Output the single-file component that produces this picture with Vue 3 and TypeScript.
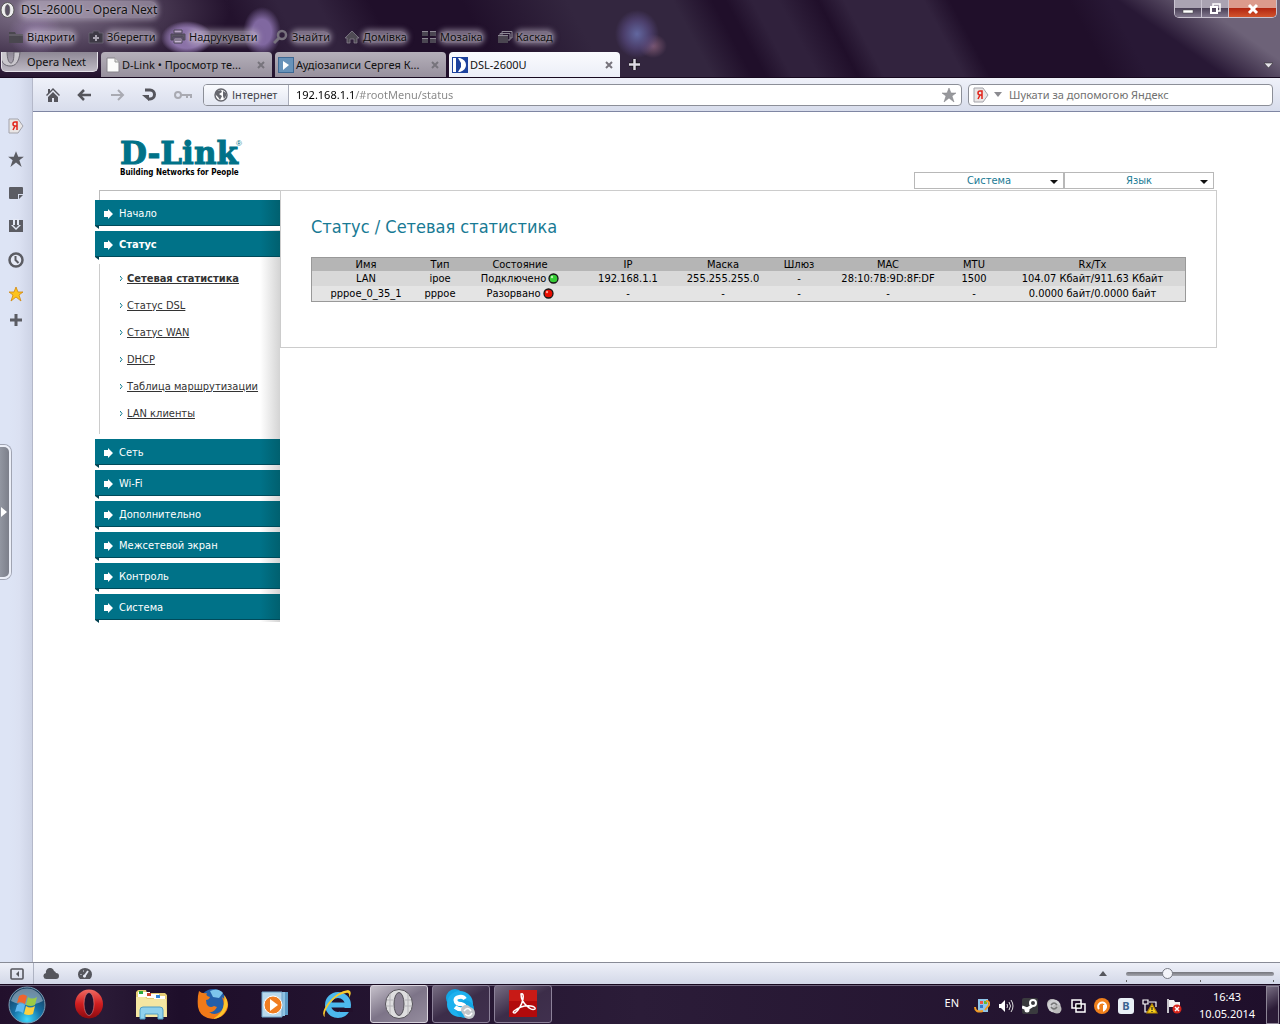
<script setup lang="ts">
import { ref } from 'vue'

interface Row {
  name: string
  type: string
  state: string
  up: boolean
  ip: string
  mask: string
  gateway: string
  mac: string
  mtu: string
  traffic: string
}

const columns: { label: string; width: number }[] = [
  { label: 'Имя', width: 108 },
  { label: 'Тип', width: 40 },
  { label: 'Состояние', width: 120 },
  { label: 'IP', width: 96 },
  { label: 'Маска', width: 94 },
  { label: 'Шлюз', width: 58 },
  { label: 'MAC', width: 120 },
  { label: 'MTU', width: 52 },
  { label: 'Rx/Tx', width: 185 },
]

const rows: Row[] = [
  { name: 'LAN', type: 'ipoe', state: 'Подключено', up: true, ip: '192.168.1.1', mask: '255.255.255.0', gateway: '-', mac: '28:10:7B:9D:8F:DF', mtu: '1500', traffic: '104.07 Кбайт/911.63 Кбайт' },
  { name: 'pppoe_0_35_1', type: 'pppoe', state: 'Разорвано', up: false, ip: '-', mask: '-', gateway: '-', mac: '-', mtu: '-', traffic: '0.0000 байт/0.0000 байт' },
]

const menu: { label: string; children?: string[] }[] = [
  { label: 'Начало' },
  { label: 'Статус', children: ['Сетевая статистика', 'Статус DSL', 'Статус WAN', 'DHCP', 'Таблица маршрутизации', 'LAN клиенты'] },
  { label: 'Сеть' },
  { label: 'Wi-Fi' },
  { label: 'Дополнительно' },
  { label: 'Межсетевой экран' },
  { label: 'Контроль' },
  { label: 'Система' },
]

const address = ref('192.168.1.1/#rootMenu/status')
const query = ref('')
const zoom = ref(26)
</script>

<template>
  <div class="desktop">
    <header class="frame">
      <div class="titlebar">
        <svg width="16" height="16" viewBox="0 0 16 16"><ellipse cx="7.500" cy="8" rx="6.500" ry="7.500" fill="#eee" stroke="#555" /><ellipse cx="7.500" cy="8" rx="2.300" ry="5.500" fill="#5b5264" stroke="#555" stroke-width=".6" /></svg>
        <span class="title"><span class="glow">DSL-2600U - Opera Next</span></span>
        <div class="winbtns">
          <button type="button" aria-label="Minimize"><svg width="12" height="12"><rect x="1" y="7" width="10" height="3" fill="#fff" stroke="#444" stroke-width=".5" /></svg></button>
          <button type="button" aria-label="Restore"><svg width="12" height="12" fill="none" stroke="#fff" stroke-width="1.5"><path d="M4 3V1h7v7H9" /><rect x="2" y="4" width="6" height="6" stroke-width="2" /></svg></button>
          <button type="button" aria-label="Close" class="close"><svg width="12" height="12" stroke="#fff" stroke-width="3"><path d="M2 2l8 8M10 2l-8 8" /></svg></button>
        </div>
      </div>

      <nav class="tools">
        <button type="button"><svg width="16" height="16"><path d="M1 3h6l1 2h7v9H1z" fill="#4a474f" /><path d="M1 6h14" stroke="#77727d" /></svg><span class="glow">Відкрити</span></button>
        <button type="button"><svg width="16" height="16"><path d="M1 4h4V2h6v2h4v10H1z" fill="#3d3945" stroke="#6b6674" stroke-width=".8" /><path d="M8 6v6M5 9h6" stroke="#aaa5b2" stroke-width="2" /></svg><span class="glow">Зберегти</span></button>
        <button type="button"><svg width="16" height="16"><path d="M4 1h8v3H4z" fill="#b9a6c8" stroke="#4b4554" /><path d="M1 5h14v6h-2V8H3v3H1z" fill="#5b5564" stroke="#4b4554" /><path d="M4 9h8v5H4z" fill="#c5b5d2" stroke="#4b4554" /><path d="M5 11h6" stroke="#4b4554" /></svg><span class="glow">Надрукувати</span></button>
        <button type="button"><svg width="16" height="16" fill="none" stroke="#77727d"><circle cx="9" cy="6" r="4" stroke-width="2.500" /><path d="M6 9l-5 5" stroke-width="3" /></svg><span class="glow">Знайти</span></button>
        <button type="button"><svg width="16" height="16"><path d="M8 2l7 7h-2v5h-3v-4H6v4H3V9H1z" fill="#4f4b54" stroke="#8d8894" stroke-width=".7" /></svg><span class="glow">Домівка</span></button>
        <button type="button"><svg width="16" height="16" fill="#4b4652"><path d="M1 3h6v4H1zM9 3h6v4H9zM1 10h6v4H1zM9 10h6v4H9z" /><path d="M1 2.500h6M9 2.500h6M1 9.500h6M9 9.500h6" stroke="#8d8894" /></svg><span class="glow">Мозаїка</span></button>
        <button type="button"><svg width="16" height="16"><path d="M5 7V2.500h10V9h-2M3 7V4.500h10V11h-2" fill="none" stroke="#8d8894" /><path d="M1 6h10v8H1z" fill="#4a4550" /><path d="M1 6.500h10" stroke="#8d8894" /></svg><span class="glow">Каскад</span></button>
      </nav>

      <div class="tabs">
        <button type="button" class="operamenu"><svg width="20" height="20" viewBox="0 0 20 20"><path d="M-1-2v6c0 7 4 10 9 10s9-3 10-14h-6c0 7-1 11-3 11S5 8 5-2z" fill="#c9c6cc" stroke="#6a6670" /></svg><span>Opera Next</span></button>
        <div class="tab">
          <svg width="16" height="16" viewBox="-2 0 16 16"><path d="M1 1h8l4 4v10H1z" fill="#fbfbfb" stroke="#87848b" /><path d="M9 1v4h4" fill="#ddd" stroke="#999" /></svg>
          <span class="tabname">D-Link • Просмотр те...</span><button type="button" class="x" aria-label="Close tab"><svg width="8" height="8"><path d="M1 1l6 6M7 1L1 7" /></svg></button>
        </div>
        <div class="tab">
          <svg width="16" height="16"><rect width="16" height="16" fill="#3e6994" /><rect x="1" y="1" width="14" height="14" fill="#6792b9" /><path d="M5 4l6 4-6 5z" fill="#fff" /></svg>
          <span class="tabname">Аудіозаписи Сергея К...</span><button type="button" class="x" aria-label="Close tab"><svg width="8" height="8"><path d="M1 1l6 6M7 1L1 7" /></svg></button>
        </div>
        <div class="tab active">
          <svg width="16" height="16"><rect width="16" height="16" fill="#1d429d" /><path d="M1 1h3v14H1zM6 1h2q6 2 6 7t-6 7H6l3-5V6z" fill="#fff" /></svg>
          <span class="tabname">DSL-2600U</span><button type="button" class="x" aria-label="Close tab"><svg width="8" height="8"><path d="M1 1l6 6M7 1L1 7" /></svg></button>
        </div>
        <button type="button" class="newtab" aria-label="New tab"><svg width="13" height="13"><path d="M6.500 1v11M1 6.500h11" stroke="#111" stroke-width="4" /><path d="M6.500 1v11M1 6.500h11" stroke="#ddd9e2" stroke-width="2.500" /></svg></button>
        <button type="button" class="closedtabs" aria-label="Closed tabs"><svg width="9" height="6"><path d="M0 1h9L4.500 6z" fill="#e6e3ea" stroke="#333" stroke-width=".6" /></svg></button>
      </div>
    </header>

    <div class="body">
      <aside class="panelbar">
        <svg class="ya" width="16" height="16"><path d="M1 1h9l5 7-5 7H1z" fill="#e9e6e6" stroke="#a3a3aa" /><path d="M9 12V4H7q-2 0-2 2t2 2h2M7 8l-2 4" fill="none" stroke="#e2231a" stroke-width="1.500" /></svg>
        <svg width="18" height="18" viewBox="0 0 16 16"><path d="M8 1l2 5h5l-4 3 2 6-5-4-5 4 2-6-4-3h5z" fill="#5b5c63" /></svg>
        <svg width="16" height="16"><path d="M2 2h12q1 0 1 1v6h-5v5H2q-1 0-1-1V3q0-1 1-1z" fill="#5b5c63" /><path d="M11 10h4l-4 4z" fill="#5b5c63" /></svg>
        <svg width="16" height="16"><path d="M1 2h14v12H1z" fill="#5b5c63" /><path d="M5 1h6v6h2l-5 5-5-5h2z" fill="#e3e8f5" /><path d="M7 2h2v5h2l-3 3-3-3h2z" fill="#5b5c63" /></svg>
        <svg width="18" height="18"><circle cx="9" cy="9" r="6.500" fill="#e6eaf6" stroke="#5b5c63" stroke-width="2.500" /><path d="M8.500 5v4l3 3" fill="none" stroke="#5b5c63" stroke-width="2" /></svg>
        <svg width="16" height="16"><path d="M8 1l2 5h5l-4 3 2 6-5-4-5 4 2-6-4-3h5z" fill="#fdc31d" stroke="#d0860f" stroke-width=".8" /></svg>
        <svg class="add" width="14" height="14"><path d="M7 1v12M1 7h12" stroke="#5b5c63" stroke-width="3" /></svg>
        <button type="button" class="handle" aria-label="Show panel"><svg width="6" height="10"><path d="M0 0l6 5-6 5z" fill="#fff" /></svg></button>
      </aside>

      <div class="main">
        <div class="addressbar">
          <div class="navicons">
            <button type="button" aria-label="Home"><svg width="16" height="16"><path d="M8 1l7 7-1 1-6-6-6 6-1-1 2-2V2h2v2zM8 5l5 5v5H9v-4H7v4H3v-5z" fill="#55555c" /></svg></button>
            <button type="button" aria-label="Back"><svg width="16" height="16" fill="none" stroke="#55555c" stroke-width="2.500"><path d="M14 8H3M7 3L2 8l5 5" /></svg></button>
            <button type="button" aria-label="Forward"><svg width="16" height="16" fill="none" stroke="#a9aab2" stroke-width="2"><path d="M2 8h11M9 3l5 5-5 5" /></svg></button>
            <button type="button" aria-label="Reload"><svg width="16" height="16"><path d="M4 3h5a4 4 0 0 1 0 9H7" fill="none" stroke="#55555c" stroke-width="3" /><path d="M1 8h7v6z" fill="#55555c" /></svg></button>
            <button type="button" aria-label="Password manager"><svg width="20" height="12"><circle cx="5" cy="6" r="3" fill="none" stroke="#a9aab2" stroke-width="2" /><path d="M8 6h10v3M14 6v3" fill="none" stroke="#a9aab2" stroke-width="2" /></svg></button>
          </div>
          <div class="field url">
            <button type="button" class="badge"><svg width="14" height="14"><circle cx="7" cy="7" r="6" fill="#fff" stroke="#66676e" stroke-width="1.500" /><path d="M3 3l4-1 1 2-3 2 3 2-2 4-2-3-3-3zM9 3l3 2 0 3-2 3-1-3z" fill="#66676e" /></svg>Інтернет</button>
            <input v-model="address" class="addr" type="text" aria-label="Address">
            <svg class="fav" width="16" height="16"><path d="M8 1l2 5h5l-4 3 2 6-5-4-5 4 2-6-4-3h5z" fill="#97989c" stroke="#808187" stroke-width=".5" /></svg>
          </div>
          <div class="field search">
            <svg width="16" height="16"><path d="M1 1h9l5 7-5 7H1z" fill="#e9e6e6" stroke="#a3a3aa" /><path d="M9 12V4H7q-2 0-2 2t2 2h2M7 8l-2 4" fill="none" stroke="#e2231a" stroke-width="1.500" /></svg>
            <svg class="drop" width="8" height="5"><path d="M0 0h8L4 5z" fill="#8b8b90" /></svg>
            <input v-model="query" type="text" placeholder="Шукати за допомогою Яндекс" aria-label="Search">
          </div>
        </div>

        <div class="page">
          <div class="site">
            <div class="top">
              <a href="#" class="logo"><span class="brand">D-Link<sup>®</sup></span><span class="slogan">Building Networks for People</span></a>
              <div class="selects">
                <label class="pick"><select aria-label="Система"><option>Система</option></select></label>
                <label class="pick"><select aria-label="Язык"><option>Язык</option></select></label>
              </div>
            </div>
            <div class="cols">
              <nav class="menu">
                <div class="rail"></div>
                <template v-for="m in menu" :key="m.label">
                  <a href="#" class="item" :class="{ open: m.children }">
                    <svg width="10" height="10"><path d="M0 2h4V0l5 5-5 5V8H0z" fill="#fff" /></svg>{{ m.label }}
                  </a>
                  <ul v-if="m.children" class="sub">
                    <li v-for="(c, i) in m.children" :key="c" :class="{ current: i === 0 }">
                      <svg width="3" height="5"><path d="M0 0l2 2.500L0 5" fill="none" stroke="#007288" /></svg><a href="#">{{ c }}</a>
                    </li>
                  </ul>
                </template>
              </nav>
              <main class="panel">
                <h1>Статус / Сетевая статистика</h1>
                <table>
                  <colgroup><col v-for="c in columns" :key="c.label" :style="{ width: c.width + 'px' }"></colgroup>
                  <thead><tr><th v-for="c in columns" :key="c.label" scope="col">{{ c.label }}</th></tr></thead>
                  <tbody>
                    <tr v-for="r in rows" :key="r.name">
                      <td>{{ r.name }}</td>
                      <td>{{ r.type }}</td>
                      <td><span class="state">{{ r.state }}<svg width="11" height="11"><circle cx="5.500" cy="5.500" r="4.500" :fill="r.up ? '#35cc35' : '#e80d00'" stroke="#151515" stroke-width="1.300" /><circle cx="4" cy="4" r="1.200" :fill="r.up ? '#b9f5b0' : '#ff9a8a'" /></svg></span></td>
                      <td>{{ r.ip }}</td>
                      <td>{{ r.mask }}</td>
                      <td>{{ r.gateway }}</td>
                      <td>{{ r.mac }}</td>
                      <td>{{ r.mtu }}</td>
                      <td>{{ r.traffic }}</td>
                    </tr>
                  </tbody>
                </table>
              </main>
            </div>
          </div>
        </div>
      </div>
    </div>

    <div class="statusbar">
      <button type="button" class="toggle" aria-label="Panels"><svg width="14" height="12"><rect x="1" y="1" width="12" height="10" rx="1" fill="none" stroke="#55565d" stroke-width="1.600" /><path d="M9 3v6L6 6z" fill="#55565d" /></svg></button>
      <button type="button" aria-label="Opera Link"><svg width="16" height="12"><path d="M4 11a3 3 0 0 1-1-6 4 4 0 0 1 8-2 3 3 0 0 1 2 2 3 3 0 0 1 0 6z" fill="#55565d" /></svg></button>
      <button type="button" aria-label="Opera Turbo"><svg width="16" height="14"><path d="M3 12a7 6.500 0 1 1 10 0z" fill="#55565d" /><path d="M7 10l4-6" stroke="#e4e8f4" stroke-width="1.800" /><path d="M4 8V7M6 4h1" stroke="#e4e8f4" /><circle cx="7.500" cy="9" r="1.500" fill="#e4e8f4" /></svg></button>
      <svg class="up" width="8" height="5"><path d="M0 5h8L4 0z" fill="#55565d" /></svg>
      <div class="zoom">
        <input v-model="zoom" type="range" min="0" max="100" aria-label="Zoom">
        <div class="ticks"><i></i><i></i><i></i></div>
      </div>
    </div>

    <footer class="taskbar">
      <button type="button" class="start" aria-label="Start">
        <svg width="38" height="38" viewBox="0 0 38 38">
          <defs><radialGradient id="orb" cx=".5" cy=".9" r=".8"><stop offset="0" stop-color="#3fd8fb" /><stop offset=".5" stop-color="#1673a8" /><stop offset="1" stop-color="#173d5e" /></radialGradient></defs>
          <circle cx="19" cy="19" r="18" fill="url(#orb)" stroke="#7e9db3" /><path d="M3 15a16.500 16.500 0 0 1 32 0q-16 8-32 0z" fill="#c3d6e2" opacity=".5" />
          <path d="M11 10q4-3 8 0l-2 8q-4-3-8-1z" fill="#f0642d" /><path d="M20 11q4 3 9 0l-2 8q-4 2-9 0z" fill="#9ccb45" /><path d="M9 19q4-3 8 0l-2 8q-4-3-8-1z" fill="#5fb8f0" /><path d="M18 20q4 3 9 0l-2 8q-4 2-9 0z" fill="#fdd13e" />
        </svg>
      </button>
      <div class="tasks">
        <button type="button" aria-label="Opera"><svg width="30" height="32" viewBox="0 0 30 32"><defs><linearGradient id="red" x2="0" y2="1"><stop offset="0" stop-color="#f06a62" /><stop offset=".5" stop-color="#cf1d1f" /><stop offset="1" stop-color="#8c0b10" /></linearGradient></defs><ellipse cx="15" cy="16" rx="14" ry="14.500" fill="url(#red)" /><ellipse cx="15" cy="16" rx="5" ry="11.500" fill="#22102c" stroke="#e88" stroke-width=".6" /></svg></button>
        <button type="button" aria-label="Explorer"><svg width="34" height="32" viewBox="0 0 34 32"><path d="M2 4l2-2h8l1 3h18l2 2v22H2z" fill="#e6cd76" /><path d="M4 4h12v5H4zM13 6h12v4H13zM20 8h11v4H20z" fill="#fff" /><path d="M5 3h4v3H5z" fill="#2ca83b" /><path d="M13 5h4v3h-4z" fill="#d0422e" /><path d="M22 7h4v3h-4z" fill="#3186d6" /><path d="M2 9h9l2 2h19l1 18H2z" fill="#f5e6a2" /><path d="M6 31V22q0-3 3-3h17q3 0 3 3v9h-5v-5H11v5z" fill="#8fd0ec" stroke="#4f9dc6" /></svg></button>
        <button type="button" aria-label="Firefox"><svg width="32" height="32" viewBox="0 0 32 32"><circle cx="16" cy="14" r="13" fill="#235fa9" /><path d="M13 3q8-4 13 2l-4 5-6-1z" fill="#7cc4ec" /><path d="M2 3q3 3 8 2-2 3 3 4-1 3-4 3 0 4 2 6 3 2 6 0l3 1q-3 6-8 5 5 4 11 0 6-5 2-15 3 2 3 3l0-4q5 7 2 14-5 9-14 9Q3 30 1 19 0 10 2 3z" fill="#f07a18" /><path d="M27 7q6 8 2 15-4 8-13 9 8-5 10-11 2-6 1-13z" fill="#fcc52c" /></svg></button>
        <button type="button" aria-label="Media Player"><svg width="30" height="30" viewBox="0 0 30 30"><path d="M8 3h20v23H8z" fill="#5b9ac5" /><path d="M5 3h20v24H5z" fill="#8fc2e2" /><path d="M2 3h20v25H2z" fill="#b9d8ec" stroke="#6fa3c8" /><circle cx="13" cy="16" r="9" fill="#f07d21" stroke="#fff" /><path d="M10 10l8 6-8 6z" fill="#fff" /></svg></button>
        <button type="button" aria-label="Internet Explorer"><svg width="32" height="32" viewBox="0 0 32 32"><circle cx="17" cy="17" r="10" fill="none" stroke="#4cb9ee" stroke-width="6" /><path d="M10 17h18" stroke="#4cb9ee" stroke-width="5" /><path d="M19 20h13v4H19z" fill="#22102c" /><path d="M4 29Q-1 26 7 15 17 3 27 2q5 1 1 8 1-6-3-5-8 1-15 9-8 10-6 15z" fill="#f7c92d" /></svg></button>
        <button type="button" class="on" aria-label="Opera Next"><svg width="30" height="32" viewBox="0 0 30 32"><ellipse cx="15" cy="16" rx="13.500" ry="14.500" fill="#dededf" stroke="#55525a" /><ellipse cx="15" cy="16" rx="5" ry="11.500" fill="#8d8596" stroke="#55525a" /><path d="M3 12h6M2 18h7M21 12h6M21 18h7M6 6v20M24 6v20" stroke="#b5b4b8" /></svg></button>
        <button type="button" class="run" aria-label="Skype"><svg width="32" height="32" viewBox="0 0 32 32"><circle cx="10" cy="10" r="9" fill="#12a5e4" /><circle cx="15" cy="16" r="13" fill="#1eb1ee" /><circle cx="20" cy="21" r="9" fill="#12a5e4" /><path d="M20 11q-2-3-6-2-5 1-3 5 1 2 5 2 5 1 3 4-4 3-9-1" fill="none" stroke="#fff" stroke-width="4" /><circle cx="21" cy="22" r="5" fill="#c3c7cb" /><circle cx="24" cy="25" r="6" fill="#c3c7cb" /><path d="M19 23q4-5 7 0M27 25q-3 5-7 1" fill="none" stroke="#fff" stroke-width="1.600" /></svg></button>
        <button type="button" class="run" aria-label="Adobe Reader"><svg width="30" height="30" viewBox="0 0 30 30"><rect x="1" y="1" width="28" height="27" fill="#b20a0c" /><path d="M1 1h28v11H1z" fill="#c81a16" /><path d="M13 5q3-1 2 5-2 9-8 14-3 0-1-2 8-6 17-5 5 1 4 3-3 2-8-3-6-5-6-12z" fill="none" stroke="#fff" stroke-width="1.500" /></svg></button>
      </div>
      <div class="tray">
        <span class="lang">EN</span>
        <div class="icons">
          <svg width="16" height="16"><path d="M4 1h10v13H4z" fill="#8ec5ea" /><path d="M6 3h3v3H6z" fill="#e54" /><path d="M10 3h3v3h-3z" fill="#6b3" /><path d="M6 7h3v3H6z" fill="#37c" /><path d="M1 9q0 6 8 4M12 3q4 0 3 4l-4 5" fill="none" stroke="#f09a25" stroke-width="2" /></svg>
          <svg width="16" height="16"><path d="M1 6h2l4-4v12l-4-4H1z" fill="#fff" /><path d="M9 6q1 2 0 4M11 4q3 4 0 8M13 2q4 6 0 12" fill="none" stroke="#ddd" /></svg>
          <svg width="16" height="16"><rect width="16" height="16" rx="2" fill="#3a3a3e" /><circle cx="11" cy="5" r="3" fill="none" stroke="#fff" stroke-width="2" /><path d="M0 9l5 2 5-3" fill="none" stroke="#fff" stroke-width="3" /><circle cx="5" cy="12" r="2.500" fill="#fff" /></svg>
          <svg width="16" height="16"><circle cx="6" cy="6" r="5" fill="#bbb" /><circle cx="8" cy="8" r="6.500" fill="#cfcfd1" /><circle cx="11" cy="11" r="4.500" fill="#bbb" /><path d="M5 7q3-4 6 0M11 9q-3 4-6 0" fill="none" stroke="#777" stroke-width="1.500" /></svg>
          <svg width="16" height="16" fill="#22102c" stroke="#fff" stroke-width="1.500"><path d="M2 2h9v8H2zM6 6h9v8H6z" /><path d="M6 6h5v4H6z" fill="#000" stroke-width="1" /></svg>
          <svg width="16" height="16"><circle cx="8" cy="8" r="8" fill="#f0801c" /><path d="M5 11a4 4 0 1 1 5 1V7" fill="none" stroke="#fff" stroke-width="2" /></svg>
          <span class="vk">B</span>
          <svg width="16" height="16" fill="none" stroke="#fff" stroke-width="1.200"><path d="M1 2h5v4H1zM3 6v8h5M7 4h7v5" /><path d="M10 6l5 9H5z" fill="#f6cf1f" stroke="#b98a00" /><path d="M10 9v3M10 13v1" stroke="#222" /></svg>
          <svg width="16" height="16"><path d="M2 1v14" stroke="#fff" stroke-width="1.500" /><path d="M3 2h5l1 2h5v5H3z" fill="#f2f2f2" /><circle cx="11" cy="11" r="4.500" fill="#d7261c" /><path d="M9 9l4 4M13 9l-4 4" stroke="#fff" stroke-width="1.500" /></svg>
        </div>
        <div class="clock"><span>16:43</span><span>10.05.2014</span></div>
        <button type="button" class="peek" aria-label="Show desktop"></button>
      </div>
    </footer>
  </div>
</template>

<style>
body { background: #22102c; }
</style>

<style scoped>
* { box-sizing: border-box; }
.desktop { min-height: 100vh; display: flex; flex-direction: column; font: 11px/16px "Noto Sans", "Open Sans", sans-serif; color: #111; }
button { font: inherit; color: inherit; background: none; border: 0; padding: 0; margin: 0; display: flex; align-items: center; }
svg { display: block; flex: none; }
input { font: inherit; border: 0; outline: 0; background: none; padding: 0; min-width: 0; }

.frame {
  height: 78px;
  display: flex;
  flex-direction: column;
  border-bottom: 1px solid #17091f;
  background:
    radial-gradient(ellipse 28px 24px at 36px 34px, #a58abf99, transparent),
    radial-gradient(ellipse 26px 17px at 187px 38px, #8b72a8 60%, #8b72a888 82%, transparent),
    radial-gradient(ellipse 19px 25px at 262px 32px, #8068a0 50%, #8068a066 80%, transparent),
    radial-gradient(ellipse 22px 24px at 637px 34px, #62679f, #574a80aa 60%, transparent),
    radial-gradient(ellipse 14px 12px at 653px 46px, #a0708aaa, transparent),
    radial-gradient(ellipse 190px 70px at 40px 10px, #85788f, transparent),
    linear-gradient(35deg, transparent 62%, #6d6278 80%) right / 320px 78px no-repeat,
    linear-gradient(62deg, #23122d 0 20%, #32233e 24% 27%, #200f2a 31% 38%, #33263f 46% 54%, #200f2a 57% 58%, #30213c 60% 62%, #200f2a 65%, #32233e 67% 73%, #200f2a 75% 84%, #281835 87%);
}
.glow { background: #c3bacb80; box-shadow: 0 0 5px 2px #c3bacb80; border-radius: 6px; line-height: 12px; text-shadow: 0 0 3px #fff8; }
.titlebar { height: 21px; display: flex; align-items: center; gap: 5px; }
.title { flex: 1; font-size: 12px; }
.winbtns { align-self: flex-start; display: flex; height: 18px; margin-right: 3px; border: 1px solid #c9c3d0; border-top: 0; border-radius: 0 0 5px 5px; overflow: hidden; }
.winbtns button { width: 27px; height: 17px; justify-content: center; background: linear-gradient(#aaa3b2 0 45%, #4b4157 50%, #81778d); border-right: 1px solid #c9c3d0; }
.winbtns .close { width: 47px; border: 0; background: linear-gradient(#dc9a8c 0 45%, #b22712 50%, #d2542c); }

.tools { display: grid; grid-template-columns: 80px 82px 103px 71px 77px 76px auto; justify-content: start; padding: 2px 0 0 8px; height: 32px; align-items: center; }
.tools button { gap: 3px; }

.tabs { flex: 1; display: flex; gap: 3px; padding-left: 1px; }
.operamenu { width: 97px; height: 20px; border: 1px solid #e6e3ea; border-top: 0; border-radius: 0 0 5px 5px; background: linear-gradient(#8d8794, #bdb8c3); gap: 5px; overflow: hidden; }
.tab { width: 171px; height: 25px; display: flex; align-items: center; padding: 0 7px 0 3px; gap: 2px; border-radius: 4px 4px 0 0; background: linear-gradient(#b5b0ba, #97909d); }
.tab.active { background: linear-gradient(#fafbfe, #eceef7); }
.tabname { flex: 1; white-space: nowrap; }
.x svg { stroke: #77747c; stroke-width: 2; }
.newtab { padding-left: 5px; }
.closedtabs { margin-left: auto; padding-right: 7px; }

.body { flex: 1; display: flex; }
.panelbar { width: 33px; position: relative; display: flex; flex-direction: column; align-items: center; gap: 17px; padding-top: 40px; background: linear-gradient(90deg, #dde4f5 30%, #dbe1f2 60%, #cdd3e5); border-right: 1px solid #b4b8c9; }
.panelbar .ya { margin-bottom: -1px; }
.panelbar .add { margin-top: -6px; }
.handle { position: absolute; left: 0; top: 367px; width: 11px; height: 134px; padding-left: 1px; border: 2px solid #eceff8; border-left: 0; border-radius: 0 7px 7px 0; background: linear-gradient(90deg, #9296a1, #7c7f8a); box-shadow: 0 0 0 1px #a0a4b2; }

.main { flex: 1; min-width: 0; display: flex; flex-direction: column; background: #fff; }
.addressbar { height: 34px; display: flex; align-items: center; gap: 6px; padding-right: 7px; background: linear-gradient(#eff1f9, #d8ddec); border-bottom: 1px solid #7f86a3; }
.navicons { width: 164px; display: flex; align-items: center; gap: 16px; padding-left: 12px; }
.field { height: 22px; display: flex; align-items: center; background: #fff; border: 1px solid #8c8f98; border-radius: 4px; }
.url { flex: 1; overflow: hidden; padding-right: 4px; }
.badge { width: 85px; height: 20px; gap: 4px; padding-left: 10px; color: #44454b; background: linear-gradient(#fafbfe, #e3e7f2); border-right: 1px solid #a9adba; }
.addr { flex: 1; height: 20px; padding-left: 7px; color: transparent; background: linear-gradient(90deg, #000 66px, #858585 66px) text; }
.search { width: 305px; padding-left: 4px; }
.search .drop { margin: 0 7px 0 5px; }
.search input { flex: 1; }
.search input::placeholder { color: #717171; opacity: 1; }

.page { flex: 1; font: 11px/14px "DejaVu Sans Condensed", "DejaVu Sans", sans-serif; }
.site { padding: 0 63px 0 62px; }
.top { height: 78px; display: flex; justify-content: space-between; align-items: flex-end; padding: 0 3px 1px 25px; }
.logo { align-self: flex-start; margin-top: 26px; display: flex; flex-direction: column; text-decoration: none; color: #000; white-space: nowrap; }
.brand { font: bold 31px/30px "DejaVu Serif", serif; color: #007288; display: flex; -webkit-text-stroke: 1px #007288; }
.brand sup { font: 8px/12px "Liberation Sans", sans-serif; -webkit-text-stroke: 0; margin-left: -2px; }
.slogan { font: bold 8px/10px "DejaVu Sans Condensed", "DejaVu Sans", sans-serif; }
.selects { display: flex; }
.pick { position: relative; width: 150px; height: 17px; display: flex; }
.pick::after { content: ""; position: absolute; right: 6px; top: 8px; border: 4px solid transparent; border-top-color: #111; border-bottom: 0; pointer-events: none; }
.pick select { flex: 1; appearance: none; font: inherit; color: #187a94; text-align: center; text-align-last: center; background: #fff; border: 1px solid #b8b8b8; border-radius: 0; padding: 0; }

.cols { display: flex; align-items: flex-start; }
.menu { width: 185px; display: flex; flex-direction: column; background: linear-gradient(90deg, transparent 165px, #d4d4d4) 0 40px no-repeat; }
.rail { height: 10px; margin-left: 4px; border: 1px solid #bbb; border-width: 1px 0 0 1px; background: #fff; }
.item { position: relative; height: 26px; margin-bottom: 5px; display: flex; align-items: center; gap: 5px; padding: 2px 0 0 9px; color: #fff; text-decoration: none; border-bottom: 1px solid #004a5a; background: linear-gradient(90deg, #007288 165px, #00606f); }
.item:last-child { margin-bottom: 2px; }
.item::after { content: ""; position: absolute; left: 0; top: 26px; border: solid transparent; border-width: 0 0 3px 4px; border-top: 3px solid #004050; border-bottom: 0; }
.item.open { font-weight: bold; }
.sub { list-style: none; margin: 2px 0 5px 4px; padding: 1px 0 7px 20px; border-left: 1px solid #ccc; }
.sub li { height: 27px; display: flex; align-items: center; gap: 4px; }
.sub a { color: #333; white-space: nowrap; }
.sub .current { font-weight: bold; }
.panel { flex: 1; min-width: 0; height: 158px; border: 1px solid #ccc; padding: 24px 30px 0; }
h1 { margin: 0 0 18px; font: 18px/24px "DejaVu Sans Condensed", "DejaVu Sans", sans-serif; color: #187a94; }
table { width: 100%; table-layout: fixed; border-collapse: separate; border-spacing: 0; border: 1px solid #999; text-align: center; color: #000; }
th, td { padding: 0; font-weight: normal; height: 15px; line-height: 14px; white-space: nowrap; }
th { height: 13px; line-height: 13px; background: #b5b5b5; }
td { background: #e4e4e4; }
tbody tr:first-child td { background: #d8d8d8; }
.state { display: flex; justify-content: center; align-items: center; gap: 2px; }

.statusbar { height: 22px; display: flex; align-items: center; padding-right: 6px; background: linear-gradient(#eef0f8, #d3d8e8); border-top: 1px solid #888b96; }
.statusbar button { width: 34px; height: 21px; justify-content: center; }
.statusbar .toggle { border-right: 1px solid #aeb3c2; }
.up { margin-left: auto; }
.zoom { width: 148px; margin-left: 19px; display: flex; flex-direction: column; }
.zoom input { appearance: none; width: 100%; height: 12px; margin: 3px 0 0; }
.zoom input::-webkit-slider-runnable-track { height: 4px; border-radius: 2px; background: linear-gradient(#74757c, #a4a6ae); }
.zoom input::-webkit-slider-thumb { appearance: none; width: 11px; height: 11px; margin-top: -4px; border-radius: 50%; border: 1px solid #777a84; background: #f4f5fa; }
.ticks { display: flex; justify-content: space-between; height: 3px; }
.ticks i { width: 1px; height: 2px; background: #666; }

.taskbar { height: 40px; display: flex; background: linear-gradient(90deg, #22102c, #2a1a36 8%, #1e0e2a 14%, #2b1c38 50%, #1f0f2b); border-top: 1px solid #17091f; box-shadow: inset 0 1px #6b6078; color: #fff; }
.start { width: 60px; padding-left: 8px; }
.tasks { display: flex; gap: 4px; }
.tasks button { width: 58px; height: 38px; justify-content: center; border-radius: 3px; }
.tasks .run { border: 1px solid #8c8199; background: linear-gradient(150deg, #776d82, #3c2d49 50%, #40304e); }
.tasks .on { border: 1px solid #d9d4de; background: linear-gradient(150deg, #c5c0ca, #7d7488 50%, #958d9e); }
.tray { margin-left: auto; display: flex; align-items: center; }
.lang { margin-right: 15px; padding-bottom: 4px; }
.icons { display: flex; gap: 8px; align-items: center; padding-top: 2px; }
.vk { width: 16px; height: 16px; border-radius: 3px; background: #e9eff6; color: #3c6491; font-weight: bold; text-align: center; line-height: 16px; }
.clock { width: 84px; padding-left: 6px; display: flex; flex-direction: column; align-items: center; line-height: 17px; }
.peek { width: 13px; height: 38px; border: 1px solid #8d8596; background: linear-gradient(150deg, #776d82, #2b1b37 60%); margin-right: 1px; }
</style>
